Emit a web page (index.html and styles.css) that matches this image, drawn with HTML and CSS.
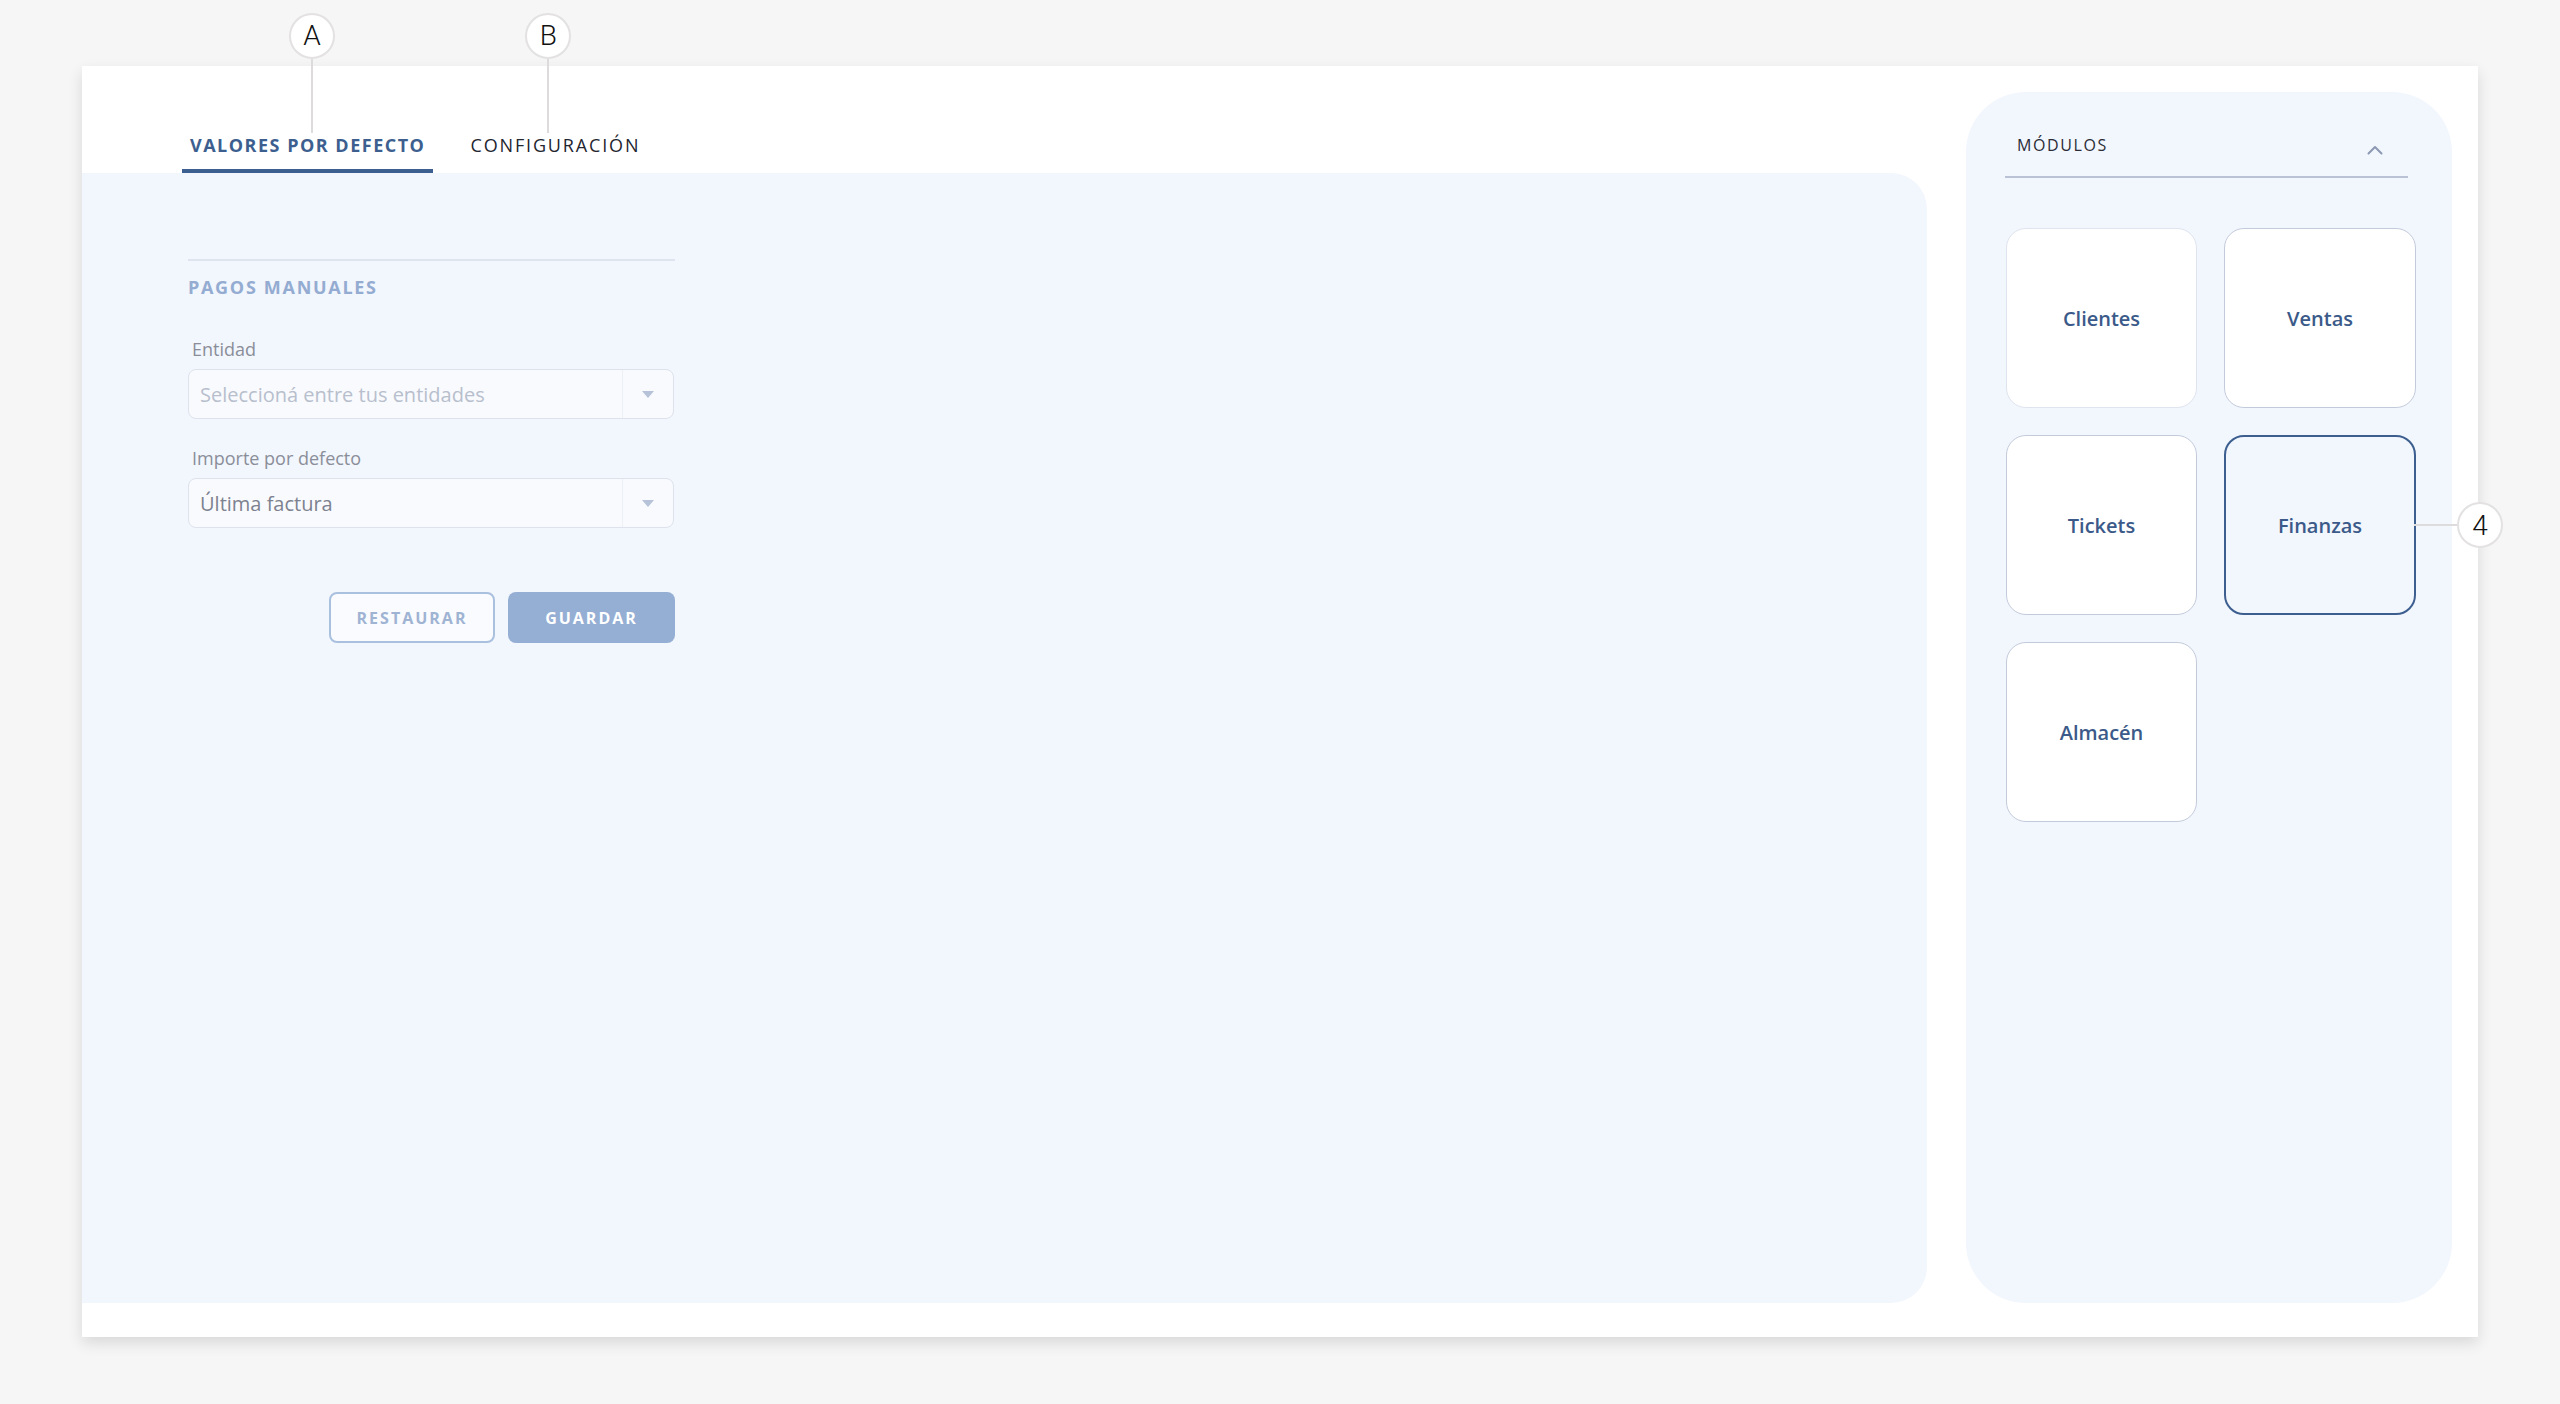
FILE: index.html
```html
<!DOCTYPE html>
<html lang="es">
<head>
    <meta charset="UTF-8">
    <meta name="viewport" content="width=device-width, initial-scale=1.0">
    <title>Finanzas - Valores por defecto</title>
    <link rel="stylesheet" href="styles.css">
</head>
<body>
    <div class="settings-window">
        <div class="main-col">
            <nav class="tabs">
                <a class="tab tab-active">
                    Valores por defecto
                    <span class="callout callout-top callout-a">A</span>
                </a>
                <a class="tab">
                    Configuración
                    <span class="callout callout-top callout-b">B</span>
                </a>
            </nav>

            <section class="tab-panel">
                <div class="form-block">
                    <h3 class="block-title">Pagos manuales</h3>

                    <div class="field">
                        <label class="field-label">Entidad</label>
                        <div class="select is-empty">
                            <span class="select-value">Seleccioná entre tus entidades</span>
                            <span class="select-arrow"></span>
                        </div>
                    </div>

                    <div class="field">
                        <label class="field-label">Importe por defecto</label>
                        <div class="select">
                            <span class="select-value">Última factura</span>
                            <span class="select-arrow"></span>
                        </div>
                    </div>

                    <div class="form-actions">
                        <button class="btn btn-outline">Restaurar</button>
                        <button class="btn btn-primary">Guardar</button>
                    </div>
                </div>
            </section>
        </div>

        <aside class="modules">
            <header class="modules-head">
                <span>Módulos</span>
                <svg class="chevron" width="16" height="10" viewBox="0 0 16 10">
                    <path d="M1.5 8.5 L8 2 L14.5 8.5" fill="none" stroke="#8b99b2" stroke-width="2" stroke-linecap="round" stroke-linejoin="round"/>
                </svg>
            </header>

            <div class="module-grid">
                <div class="module-card module-card-light">Clientes</div>
                <div class="module-card">Ventas</div>
                <div class="module-card">Tickets</div>
                <div class="module-card is-selected">
                    Finanzas
                    <span class="callout callout-side">4</span>
                </div>
                <div class="module-card">Almacén</div>
            </div>
        </aside>
    </div>
</body>
</html>
```

FILE: styles.css
```css
:root {
    --primary: #3d5f90;
    --primary-soft: #94aed4;
    --panel: #f2f6fd;
    --line: #dfe5ef;
    --text-dark: #23252f;
    --muted: #8a8e99;
}

* {
    margin: 0;
    padding: 0;
    box-sizing: border-box;
}

body {
    font-family: 'Open Sans', 'Noto Sans', sans-serif;
    background: #f6f6f6;
    color: var(--text-dark);
    width: 2560px;
    height: 1404px;
    overflow: hidden;
}

/* Outer white window */
.settings-window {
    margin: 66px 0 0 82px;
    width: 2396px;
    height: 1271px;
    display: flex;
    gap: 39px;
    padding: 0 26px 34px 0;
    background: #fff;
    box-shadow: 0 6px 14px rgba(0, 0, 0, 0.12);
}

.main-col {
    flex: 1;
    display: flex;
    flex-direction: column;
}

/* Tabs */
.tabs {
    height: 107px;
    display: flex;
    align-items: flex-end;
    gap: 29px;
    padding-left: 100px;
}

.tab {
    position: relative;
    display: block;
    padding: 0 8px 12px;
    border-bottom: 4px solid transparent;
    font-size: 18px;
    line-height: 24px;
    letter-spacing: 1.85px;
    text-transform: uppercase;
    color: var(--text-dark);
    cursor: pointer;
}

.tab-active {
    font-weight: 700;
    letter-spacing: 1.5px;
    color: var(--primary);
    border-bottom-color: var(--primary);
}

.tab-panel {
    flex: 1;
    background: var(--panel);
    border-radius: 0 36px 36px 0;
    padding: 86px 0 0 106px;
}

/* Form */
.form-block {
    width: 487px;
    border-top: 2px solid var(--line);
    padding-top: 14px;
}

.block-title {
    font-size: 18px;
    line-height: 24px;
    font-weight: 700;
    letter-spacing: 1.7px;
    text-transform: uppercase;
    color: #94acd1;
    margin-bottom: 38px;
}

.field + .field {
    margin-top: 27px;
}

.field-label {
    display: block;
    margin: 0 0 8px 4px;
    font-size: 18px;
    line-height: 24px;
    font-weight: 500;
    color: var(--muted);
}

.select {
    display: flex;
    align-items: center;
    height: 50px;
    width: 486px;
    background: #f9fafd;
    border: 1px solid #dde2ec;
    border-radius: 8px;
}

.select-value {
    flex: 1;
    padding-left: 11px;
    font-size: 20px;
    color: #7d8290;
}

.select.is-empty .select-value {
    color: #b7bfcd;
}

.select-arrow {
    position: relative;
    width: 51px;
    height: 100%;
    border-left: 1px solid #edf0f5;
}

.select-arrow::after {
    content: '';
    position: absolute;
    left: 19px;
    top: 21px;
    border-left: 6px solid transparent;
    border-right: 6px solid transparent;
    border-top: 7px solid #b6c2d8;
}

.form-actions {
    display: flex;
    justify-content: flex-end;
    gap: 13px;
    margin-top: 64px;
}

.btn {
    height: 51px;
    width: 166px;
    border-radius: 8px;
    font-family: inherit;
    font-size: 16px;
    font-weight: 700;
    letter-spacing: 2px;
    text-transform: uppercase;
    cursor: pointer;
}

.btn-outline {
    background: #f9fbfe;
    border: 2px solid #aac0df;
    color: #9fb3d3;
}

.btn-primary {
    width: 167px;
    background: var(--primary-soft);
    border: none;
    color: #fff;
}

/* Modules sidebar */
.modules {
    width: 486px;
    margin-top: 26px;
    background: var(--panel);
    border-radius: 60px;
    padding: 41px 36px 0 40px;
}

.modules-head {
    display: flex;
    justify-content: space-between;
    align-items: center;
    margin: 0 8px 0 -1px;
    padding: 0 25px 19px 12px;
    border-bottom: 2px solid #b9c3d5;
    font-size: 16px;
    line-height: 24px;
    letter-spacing: 1.6px;
    text-transform: uppercase;
    color: #2a2c36;
}

.chevron {
    margin-top: 9px;
}

.module-grid {
    display: grid;
    grid-template-columns: 191px 192px;
    grid-auto-rows: 180px;
    column-gap: 27px;
    row-gap: 27px;
    margin-top: 50px;
}

.module-card {
    position: relative;
    display: flex;
    align-items: center;
    justify-content: center;
    background: #fff;
    border: 1px solid #c3cbdb;
    border-radius: 20px;
    font-size: 20px;
    font-weight: 600;
    color: #3b5a89;
}

.module-card-light {
    border-color: #dfe4ee;
}

.module-card.is-selected {
    background: transparent;
    border: 2px solid var(--primary);
}

/* Numbered callouts */
.callout {
    position: absolute;
    width: 46px;
    height: 46px;
    display: flex;
    align-items: center;
    justify-content: center;
    background: #fff;
    border: 2px solid #e3e1e1;
    border-radius: 50%;
    font-family: Roboto, 'Liberation Sans', sans-serif;
    font-size: 28px;
    font-weight: 300;
    letter-spacing: 0;
    color: #111;
}

.callout-top {
    top: -120px;
}

.callout-top::after {
    content: '';
    position: absolute;
    left: 20px;
    top: 44px;
    width: 2px;
    height: 74px;
    background: #dddbdb;
}

.callout-a {
    left: 107px;
}

.callout-b {
    left: 63px;
}

.callout-side {
    top: 50%;
    right: -89px;
    margin-top: -23px;
}

.callout-side::before {
    content: '';
    position: absolute;
    right: 44px;
    top: 20px;
    width: 43px;
    height: 2px;
    background: #dddbdb;
}
```
